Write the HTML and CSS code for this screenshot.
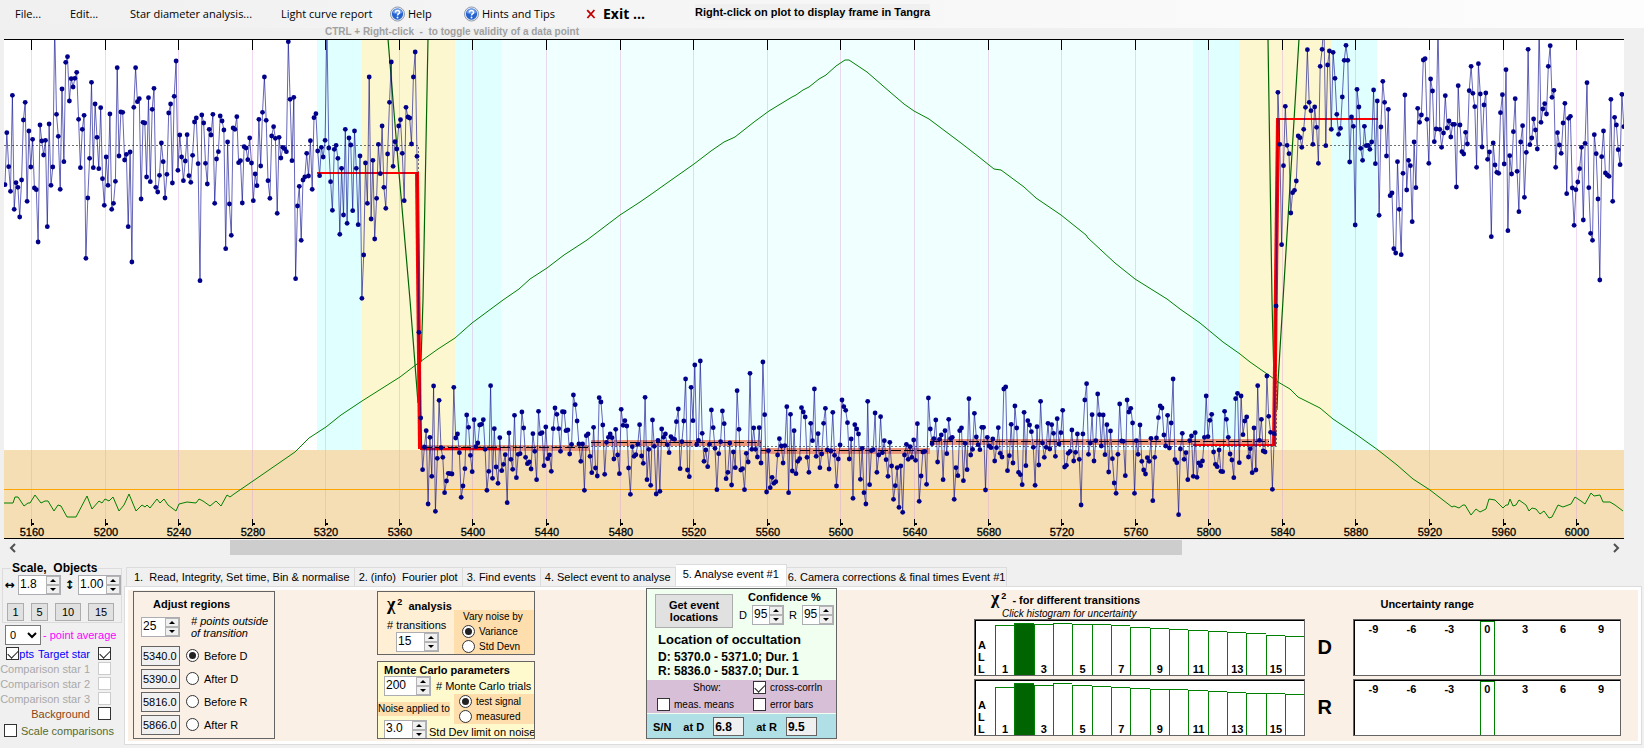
FILE: index.html
```html
<!DOCTYPE html>
<html lang="en">
<head>
  <meta charset="UTF-8">
  <meta name="viewport" content="width=device-width, initial-scale=1.0">
  <title>Light curve analysis</title>
  <link rel="stylesheet" href="styles.css">
</head>
<body>
  <header>
    <nav class="menu">
      <a href="#">File...</a>
      <a href="#">Edit...</a>
      <a href="#">Star diameter analysis...</a>
      <a href="#">Light curve report</a>
      <a href="#" class="with-icon">
        <svg class="help-icon" viewBox="0 0 16 16"><circle cx="8" cy="8" r="7.5" fill="#e4e8ee" stroke="#8b97a8"/><circle cx="8" cy="8" r="6" fill="#2563cf"/><path d="M3 7a5 5 0 0 1 10 0q-5 2-10 0" fill="#6c9bea"/><path d="M5.8 6.4q0-2.2 2.2-2.2t2.2 1.9q0 1-1.1 1.7T8 9.6" fill="none" stroke="#fff" stroke-width="1.6"/><circle cx="8" cy="11.7" r="1" fill="#fff"/></svg>
        Help
      </a>
      <a href="#" class="with-icon">
        <svg class="help-icon" viewBox="0 0 16 16"><circle cx="8" cy="8" r="7.5" fill="#e4e8ee" stroke="#8b97a8"/><circle cx="8" cy="8" r="6" fill="#2563cf"/><path d="M3 7a5 5 0 0 1 10 0q-5 2-10 0" fill="#6c9bea"/><path d="M5.8 6.4q0-2.2 2.2-2.2t2.2 1.9q0 1-1.1 1.7T8 9.6" fill="none" stroke="#fff" stroke-width="1.6"/><circle cx="8" cy="11.7" r="1" fill="#fff"/></svg>
        Hints and Tips
      </a>
      <a href="#" class="with-icon exit">
        <svg class="cross-icon" viewBox="0 0 10 10"><path d="M1.2 1.2L8.6 9M8.4 1L1.4 9" fill="none" stroke="#c00000" stroke-width="1.8"/></svg>
        Exit ...
      </a>
      <span class="hint">Right-click on plot to display frame in Tangra</span>
    </nav>
    <p class="sub-hint">CTRL + Right-click&nbsp; -&nbsp; to toggle validity of a data point</p>
  </header>

  <main>
    <svg id="plot" class="plot" viewBox="4 39 1620 500"></svg>

    <div class="scrollbar">
      <button type="button" aria-label="Scroll left"><svg viewBox="0 0 8 10"><path d="M6 1L2 5l4 4" /></svg></button>
      <div class="track"><div class="thumb"></div></div>
      <button type="button" aria-label="Scroll right"><svg viewBox="0 0 8 10"><path d="M2 1l4 4-4 4" /></svg></button>
    </div>

    <div class="lower">
      <aside class="sidebar">
        <fieldset class="scale">
          <legend>Scale,&nbsp; Objects</legend>
          <div class="scale-row">
            <label for="scale-x">↔</label>
            <span class="spin"><input id="scale-x" value="1.8"><span class="arrows"><button type="button" aria-label="Up"></button><button type="button" aria-label="Down"></button></span></span>
            <label for="scale-y">↕</label>
            <span class="spin"><input id="scale-y" value="1.00"><span class="arrows"><button type="button" aria-label="Up"></button><button type="button" aria-label="Down"></button></span></span>
          </div>
          <div class="zoom-row">
            <button type="button">1</button>
            <button type="button">5</button>
            <button type="button" class="wide">10</button>
            <button type="button" class="wide">15</button>
          </div>
        </fieldset>
        <div class="average">
          <select id="average"><option>0</option></select>
          <label for="average">- point average</label>
        </div>
        <div class="star target">
          <input type="checkbox" id="pts" checked><label for="pts" class="pts">pts</label>
          <label for="target">Target star</label><input type="checkbox" id="target" checked>
        </div>
        <div class="star off"><label for="c1">Comparison star 1</label><input type="checkbox" id="c1" disabled></div>
        <div class="star off"><label for="c2">Comparison star 2</label><input type="checkbox" id="c2" disabled></div>
        <div class="star off"><label for="c3">Comparison star 3</label><input type="checkbox" id="c3" disabled></div>
        <div class="star background"><label for="bg">Background</label><input type="checkbox" id="bg"></div>
        <div class="compare"><input type="checkbox" id="compare"><label for="compare">Scale comparisons</label></div>
      </aside>

      <section class="tabs">
        <div class="tab-row" role="tablist">
          <button type="button" role="tab" class="tab tab-read">1.&nbsp; Read, Integrity, Set time, Bin &amp; normalise</button>
          <button type="button" role="tab" class="tab">2. (info)&nbsp; Fourier plot</button>
          <button type="button" role="tab" class="tab">3. Find events</button>
          <button type="button" role="tab" class="tab">4. Select event to analyse</button>
          <button type="button" role="tab" class="tab active" aria-selected="true">5. Analyse event #1</button>
          <button type="button" role="tab" class="tab tab-camera">6. Camera corrections &amp; final times Event #1</button>
        </div>

        <div class="page">
          <div class="box adjust">
            <h2>Adjust regions</h2>
            <div class="points">
              <span class="spin"><input id="points" value="25"><span class="arrows"><button type="button" aria-label="Up"></button><button type="button" aria-label="Down"></button></span></span>
              <label for="points"># points outside<br>of transition</label>
            </div>
            <div class="region"><input class="value" aria-label="Before D frame" value="5340.0"><input type="radio" name="region" id="before-d" checked><label for="before-d">Before D</label></div>
            <div class="region"><input class="value" aria-label="After D frame" value="5390.0"><input type="radio" name="region" id="after-d"><label for="after-d">After D</label></div>
            <div class="region"><input class="value" aria-label="Before R frame" value="5816.0"><input type="radio" name="region" id="before-r"><label for="before-r">Before R</label></div>
            <div class="region"><input class="value" aria-label="After R frame" value="5866.0"><input type="radio" name="region" id="after-r"><label for="after-r">After R</label></div>
          </div>

          <div class="noise">
            <div class="box chi">
              <div class="chi-left">
                <h2><span class="greek">χ</span><sup>2</sup> analysis</h2>
                <label for="transitions"># transitions</label>
                <span class="spin"><input id="transitions" value="15"><span class="arrows"><button type="button" aria-label="Up"></button><button type="button" aria-label="Down"></button></span></span>
              </div>
              <div class="vary">
                <span>Vary noise by</span>
                <div><input type="radio" name="vary" id="variance" checked><label for="variance">Variance</label></div>
                <div><input type="radio" name="vary" id="stddev"><label for="stddev">Std Devn</label></div>
              </div>
            </div>
            <div class="box monte">
              <h2>Monte Carlo parameters</h2>
              <div class="trials">
                <span class="spin"><input id="trials" value="200"><span class="arrows"><button type="button" aria-label="Up"></button><button type="button" aria-label="Down"></button></span></span>
                <label for="trials"># Monte Carlo trials</label>
              </div>
              <div class="applied">
                <span class="applied-label">Noise applied to</span>
                <div class="applied-options">
                  <div><input type="radio" name="applied" id="test-signal" checked><label for="test-signal">test signal</label></div>
                  <div><input type="radio" name="applied" id="measured"><label for="measured">measured</label></div>
                </div>
              </div>
              <div class="limit">
                <span class="spin"><input id="limit" value="3.0"><span class="arrows"><button type="button" aria-label="Up"></button><button type="button" aria-label="Down"></button></span></span>
                <label for="limit">Std Dev limit on noise</label>
              </div>
            </div>
          </div>

          <div class="box event">
            <div class="event-top">
              <button type="button" class="locate">Get event<br>locations</button>
              <div class="confidence">
                <h2>Confidence %</h2>
                <div>
                  <label for="conf-d">D</label>
                  <span class="spin"><input id="conf-d" value="95"><span class="arrows"><button type="button" aria-label="Up"></button><button type="button" aria-label="Down"></button></span></span>
                  <label for="conf-r">R</label>
                  <span class="spin"><input id="conf-r" value="95"><span class="arrows"><button type="button" aria-label="Up"></button><button type="button" aria-label="Down"></button></span></span>
                </div>
              </div>
            </div>
            <div class="location">
              <h3>Location of occultation</h3>
              <p>D: 5370.0 - 5371.0; Dur. 1</p>
              <p>R: 5836.0 - 5837.0; Dur. 1</p>
            </div>
            <div class="show">
              <span class="show-title">Show:</span>
              <span><input type="checkbox" id="corr" checked><label for="corr">cross-corrln</label></span>
              <span><input type="checkbox" id="means"><label for="means">meas. means</label></span>
              <span><input type="checkbox" id="errors"><label for="errors">error bars</label></span>
            </div>
            <div class="sn">
              <span>S/N</span>
              <label for="sn-d">at D</label><input class="value" id="sn-d" value="6.8">
              <label for="sn-r">at R</label><input class="value" id="sn-r" value="9.5">
            </div>
          </div>

          <div class="histograms">
            <h2><span class="greek">χ</span><sup>2</sup> - for different transitions</h2>
            <p>Click histogram for uncertainty</p>
            <div class="histogram" id="hist-d"></div>
            <div class="histogram" id="hist-r"></div>
          </div>

          <div class="letters">
            <span>D</span>
            <span>R</span>
          </div>

          <div class="ranges">
            <h2>Uncertainty range</h2>
            <div class="range"><span>-9</span><span>-6</span><span>-3</span><span class="zero">0</span><span>3</span><span>6</span><span>9</span></div>
            <div class="range"><span>-9</span><span>-6</span><span>-3</span><span class="zero">0</span><span>3</span><span>6</span><span>9</span></div>
          </div>
        </div>
      </section>
    </div>
  </main>

  <script src="chart.js"></script>
</body>
</html>
```
FILE: styles.css
```css
* {
  box-sizing: border-box;
}
body {
  margin: 0;
  background-color: #f0f0f0;
  color: #000;
  font-family: 'Liberation Sans', Arial, sans-serif;
  font-size: 11px;
  line-height: 14px;
}
h2, h3, p {
  margin: 0;
}
h2 {
  font-size: 11px;
  line-height: 16px;
}
button, input, select {
  font: inherit;
  color: inherit;
  margin: 0;
  padding: 0;
}
label, .tab, h2, h3, p {
  white-space: nowrap;
}

/* menu */
header {
  height: 39px;
}
.menu {
  display: grid;
  grid-template-columns: 55px 60px 151px 109px 74px 122px 109px auto;
  align-items: center;
  justify-content: start;
  height: 28px;
  padding-left: 15px;
  background: linear-gradient(to right, #f0f0f0, #fdfdfd);
  font-family: 'Open Sans', 'Noto Sans', sans-serif;
  font-size: 11px;
}
.menu a {
  color: #000;
  text-decoration: none;
  white-space: nowrap;
}
.with-icon {
  display: flex;
  align-items: center;
  gap: 3px;
}
.help-icon {
  width: 15px;
  height: 16px;
}
.cross-icon {
  width: 10px;
  height: 10px;
  margin-right: 4px;
}
.menu .exit {
  font-size: 14px;
  font-weight: bold;
}
.hint {
  align-self: start;
  margin-top: 4px;
  background-color: #f0f0f0;
  font-family: 'Liberation Sans', Arial, sans-serif;
  font-size: 11px;
  font-weight: bold;
  line-height: 16px;
}
.sub-hint {
  padding-left: 325px;
  color: #a0a0a0;
  font-size: 10px;
  font-weight: bold;
  line-height: 8px;
}

/* light curve */
.plot {
  display: block;
  width: calc(100% - 24px);
  margin-left: 4px;
  font-size: 11px;
}
.plot rect, .plot line {
  shape-rendering: crispEdges;
}
.curve {
  fill: none;
}
.scrollbar {
  display: flex;
  height: 17px;
  margin: 0 20px 0 4px;
  padding: 1px 0;
}
.scrollbar button {
  width: 17px;
  border: 0;
  background: none;
}
.scrollbar svg {
  display: block;
  width: 8px;
  height: 10px;
  margin: auto;
  fill: none;
  stroke: #505050;
  stroke-width: 2;
}
.track {
  flex: 1;
}
.thumb {
  width: 60%;
  height: 15px;
  margin-left: 13.2%;
  background-color: #cdcdcd;
}

/* form controls */
.spin {
  display: inline-flex;
  height: 20px;
  border: 1px solid #abadb3;
  background-color: #fff;
}
.spin input {
  flex: 1;
  width: 0;
  padding-left: 1px;
  padding-bottom: 3px;
  border: 0;
  outline: 0;
  background: none;
  font-size: 12px;
}
.arrows {
  display: flex;
  flex-direction: column;
  width: 14px;
}
.arrows button {
  display: flex;
  flex: 1;
  align-items: center;
  justify-content: center;
  border: 1px solid #b4b4b4;
  background-color: #f0f0f0;
}
.arrows button::before {
  content: '';
  border: 3px solid transparent;
  border-top-width: 0;
  border-bottom-color: #000;
}
.arrows button:last-child::before {
  border-top: 3px solid #000;
  border-bottom-width: 0;
}
input[type="checkbox"], input[type="radio"] {
  appearance: none;
  display: grid;
  flex: none;
  place-items: center;
  width: 13px;
  height: 13px;
  border: 1px solid #333;
  background-color: #fff;
}
input[type="radio"] {
  border-radius: 50%;
}
input[type="radio"]:checked::after {
  content: '';
  width: 7px;
  height: 7px;
  border-radius: 50%;
  background-color: #222;
}
input[type="checkbox"]:checked::after {
  content: '';
  width: 9px;
  height: 5px;
  border-left: 1px solid #222;
  border-bottom: 1px solid #222;
  transform: translateY(-1px) rotate(-45deg);
}
input[type="checkbox"]:disabled {
  border-color: #ccc;
}
.value {
  width: 39px;
  height: 20px;
  padding-left: 1px;
  border: 1px solid #646464;
  background-color: #f0f0f0;
}

/* sidebar */
.lower {
  display: flex;
}
.sidebar {
  width: 124px;
  padding-top: 5px;
}
.scale {
  width: 119px;
  height: 62px;
  margin: 0 0 0 2px;
  padding: 0;
  border: 1px solid #dcdcdc;
}
.scale legend {
  margin-left: 8px;
  padding: 0 1px;
  font-size: 12px;
  font-weight: bold;
  line-height: 14px;
}
.scale-row {
  display: flex;
  align-items: center;
  gap: 2px;
}
.scale-row label {
  width: 13px;
  font-family: 'DejaVu Sans', sans-serif;
  font-size: 12px;
  font-weight: bold;
  text-align: center;
}
.scale-row .spin {
  width: 43px;
}
.zoom-row {
  display: flex;
  gap: 7px;
  margin: 8px 0 0 4px;
}
.zoom-row button {
  width: 17px;
  height: 18px;
  border: 1px solid #adadad;
  background-color: #e1e1e1;
}
.zoom-row .wide {
  width: 26px;
}
.average {
  display: flex;
  align-items: center;
  width: 120px;
  height: 23px;
  padding-left: 5px;
  color: #f0f;
}
.average select {
  flex: none;
  width: 36px;
  height: 20px;
  margin-right: 2px;
  border: 1px solid #7a7a7a;
  background-color: #fff;
  color: #000;
}
.star {
  display: flex;
  align-items: center;
  justify-content: flex-end;
  gap: 8px;
  width: 111px;
  height: 15px;
}
.target {
  gap: 0;
  color: #00f;
}
.pts {
  margin-right: 4px;
}
.target #target {
  margin-left: 8px;
}
.off {
  color: #a9a9a9;
}
.background {
  color: #8b4513;
}
.compare {
  display: flex;
  align-items: center;
  gap: 4px;
  width: 120px;
  height: 19px;
  padding-left: 4px;
  color: #556b2f;
}

/* tabs */
.tabs {
  flex: 1;
  min-width: 0;
  padding: 8px 2px 0 0;
}
.tab-row {
  display: flex;
  align-items: flex-end;
  height: 22px;
  padding-left: 2px;
}
.tab {
  height: 19px;
  padding: 0 4px;
  border: 1px solid #dcdcdc;
  border-left-width: 0;
  border-bottom: 0;
  background-color: #f0f0f0;
}
.tab-read {
  padding: 0 4px 0 7px;
  border-left-width: 1px;
}
.tab-camera {
  padding: 0 1px;
}
.tab.active {
  height: 22px;
  padding: 0 7px 3px;
  background-color: #fff;
}
.page {
  display: flex;
  height: 159px;
  padding: 0 20px 0 5px;
  border: 1px solid #dcdcdc;
  box-shadow: inset 0 0 0 3px #fff;
  background-color: #faf0e6;
}
.box {
  flex: none;
  border: 1px solid #646464;
  overflow: hidden;
}
.adjust {
  width: 142px;
  height: 148px;
  margin: 4px 0 0 3px;
  padding-left: 7px;
}
.adjust h2 {
  padding: 4px 0 4px 12px;
}
.points {
  display: flex;
  align-items: center;
  gap: 11px;
  height: 22px;
  margin-bottom: 6px;
  font-style: italic;
  line-height: 12px;
}
.points .spin {
  width: 39px;
  font-style: normal;
}
.region {
  display: flex;
  align-items: center;
  gap: 5px;
  height: 23px;
}
.region .value {
  margin-right: 1px;
}

.noise {
  margin: 4px 0 0 102px;
}
.noise .box {
  width: 158px;
}
.chi {
  display: flex;
  justify-content: space-between;
  height: 64px;
  margin-bottom: 6px;
  background-color: #ffefd5;
}
.chi-left {
  padding: 4px 0 0 9px;
}
.greek {
  font-family: 'Liberation Serif', serif;
  font-size: 18px;
}
h2 sup {
  font-size: 9px;
  line-height: 0;
  margin: 0 3px 0 2px;
}
.chi-left label {
  display: block;
  padding-top: 4px;
}
.chi-left .spin {
  width: 43px;
  margin-left: 9px;
}
.vary {
  align-self: flex-end;
  width: 80px;
  height: 44px;
  padding-left: 8px;
  background-color: #ffdead;
  font-size: 10px;
}
.vary div, .applied-options div {
  display: flex;
  align-items: center;
  gap: 4px;
  height: 15px;
}
.vary span {
  padding-left: 1px;
}
.monte {
  height: 78px;
  background-color: #fffacd;
}
.monte h2 {
  padding-left: 6px;
}
.trials {
  display: flex;
  align-items: center;
  gap: 5px;
  height: 16px;
  padding-left: 6px;
}
.trials .spin {
  width: 47px;
}
.applied {
  display: flex;
  align-items: center;
  justify-content: space-between;
  font-size: 10px;
}
.applied-label {
  background-color: #ffdead;
  white-space: nowrap;
}
.applied-options {
  width: 80px;
  padding-left: 5px;
  background-color: #ffdead;
}
.limit {
  display: flex;
  align-items: center;
  gap: 2px;
  height: 15px;
  padding-left: 6px;
}
.limit .spin {
  flex: none;
  width: 43px;
  margin-top: -4px;
}

.event {
  width: 191px;
  height: 151px;
  margin: 1px 0 0 111px;
  background-color: #f0fff0;
}
.event-top {
  display: flex;
  gap: 6px;
  padding-left: 8px;
}
.locate {
  width: 78px;
  height: 34px;
  margin-top: 5px;
  border: 1px solid #adadad;
  background-color: #e1e1e1;
  font-weight: bold;
  line-height: 12px;
}
.confidence h2 {
  padding-left: 9px;
}
.confidence div {
  display: flex;
  align-items: center;
  gap: 5px;
}
.confidence .spin {
  width: 32px;
}
.location {
  height: 52px;
  padding: 2px 0 0 11px;
  font-size: 12px;
  font-weight: bold;
}
.location h3 {
  font-size: 13px;
  line-height: 20px;
}
.show {
  display: grid;
  grid-template-columns: 96px auto;
  align-items: center;
  height: 33px;
  padding-left: 10px;
  background-color: #d8bfd8;
  font-size: 10px;
}
.show span {
  display: flex;
  gap: 4px;
}
.show .show-title {
  padding-left: 36px;
}
.sn {
  display: flex;
  align-items: center;
  height: 25px;
  margin-top: 1px;
  padding-left: 6px;
  background-color: #b0e0e6;
  font-weight: bold;
}
.sn label {
  margin: 0 9px 0 12px;
}
.sn .value {
  width: 31px;
  height: 19px;
  font-size: 12px;
}

.histograms {
  flex: 332;
  margin-left: 137px;
}
.histograms h2 {
  padding: 2px 0 0 17px;
  line-height: 18px;
}
.histograms p {
  padding-left: 28px;
  font-size: 10px;
  font-style: italic;
  line-height: 10px;
}
.histogram, .range {
  display: flex;
  height: 57px;
  margin-bottom: 3px;
  border: 1px solid #646464;
  background-color: #fff;
  box-shadow: inset 1px 1px 0 #000;
  overflow: hidden;
}
.histogram {
  align-items: flex-end;
}
.all {
  width: 20px;
  padding: 0 0 0 3px;
  font-weight: bold;
  line-height: 12px;
}
.bar {
  display: flex;
  flex: 1;
  align-items: flex-end;
  justify-content: center;
  border-top: 1px solid #008000;
  border-left: 1px solid #008000;
  font-weight: bold;
  line-height: 11px;
}
.bar.selected {
  background-color: #006400;
}
.letters {
  display: flex;
  flex-direction: column;
  gap: 3px;
  width: 48px;
  padding: 32px 0 0 12px;
  font-size: 20px;
  font-weight: bold;
}
.letters span {
  height: 57px;
  line-height: 57px;
}
.ranges {
  flex: 268;
}
.ranges h2 {
  padding: 9px 0 7px 27px;
}
.range span {
  display: flex;
  flex: 1;
  justify-content: center;
  padding-top: 1px;
  font-weight: bold;
  line-height: 16px;
}
.range .zero::before {
  content: '';
  position: absolute;
  width: 13px;
  height: 53px;
  border: 1px solid #008000;
  border-bottom: 0;
}
```
FILE: chart.js
```js
// brightness of each frame, a third of a pixel per unit, measured from the top
const frames = [
  // before the D event
  554,398,500,574,286,628,548,562,651,540,360,307,604,393,501,418,564,569,726,375,423,465,421,680,372,556,501,80,343,409,
  568,267,485,187,170,303,236,261,235,217,358,503,388,346,775,594,475,247,503,312,412,506,323,536,616,471,556,342,628,610,
  544,203,468,336,337,480,463,680,456,786,322,203,305,296,597,367,369,531,293,545,328,265,562,576,526,429,485,594,523,339,
  312,549,289,183,511,405,471,542,483,404,527,547,466,366,354,491,842,345,369,490,552,388,405,343,610,477,455,348,363,390,
  746,426,612,706,384,388,350,488,482,609,440,444,479,414,489,602,522,557,358,498,337,231,361,542,595,408,380,415,640,412,
  474,442,446,455,125,298,482,292,836,618,559,721,540,531,460,528,422,568,353,341,453,527,442,471,421,80,444,545,631,448,
  436,475,703,505,645,388,670,414,435,632,393,505,674,468,895,765,489,610,231,657,481,717,595,433,521,378,562,625,462,307,
  186,499,425,447,378,359,460,602,322,351,354,432,231,156,469,
  // occulted
  997,1254,1409,1341,1292,1512,1312,1429,1158,1534,1375,1201,1343,1372,1478,1443,1420,1421,1422,1162,1314,1302,1358,1492,
  1458,1406,1245,1282,1366,1415,1259,1340,1329,1275,1273,1259,1348,1471,1414,1157,1435,1286,1401,1450,1313,1412,1393,1364,
  1508,1299,1378,1408,1246,1433,1363,1361,1236,1284,1372,1391,1386,1407,1301,1354,1439,1234,1301,1298,1397,1281,1376,1365,
  1414,1286,1224,1243,1286,1354,1235,1236,1292,1290,1362,1333,1185,1214,1263,1332,1384,1332,1471,1307,1302,1369,1418,1282,
  1404,1428,1193,1206,1275,1423,1327,1312,1302,1313,1377,1288,1365,1421,1228,1276,1262,1278,1404,1483,1340,1369,1364,1333,
  1274,1368,1390,1192,1439,1348,1456,1260,1339,1482,1321,1474,1287,1312,1302,1334,1358,1310,1316,1318,1265,1227,1406,1325,
  1263,1137,1410,1430,1162,1262,1095,1334,1321,1083,1300,1384,1350,1400,1333,1230,1283,1345,1469,1361,1325,1233,1271,1436,
  1417,1329,1455,1356,1403,1172,1288,1410,1406,1469,1360,1386,1120,1348,1284,1348,1371,1283,1389,1086,1244,1476,1352,1463,
  1432,1450,1445,1365,1316,1338,1389,1337,1220,1478,1243,1413,1292,1421,1384,1376,1223,1236,1251,1372,1417,1270,1322,1167,
  1369,1301,1403,1362,1270,1225,1350,1407,1353,1237,1366,1458,1377,1335,1200,1220,1231,1268,1377,1317,1495,1274,1287,1302,
  1438,1345,1478,1512,1204,1454,1352,1349,1239,1417,1365,1250,1358,1322,1379,1429,1327,1398,1498,1457,1403,1522,1398,1537,
  1365,1333,1378,1340,1372,1320,1381,1271,1504,1428,1356,1354,1453,1194,1287,1331,1316,1260,1386,1318,1305,1439,1292,1361,
  1258,1316,1312,1498,1403,1427,1292,1284,1442,1330,1409,1196,1365,1348,1240,1311,1334,1349,1282,1282,1470,1312,1338,1343,
  1317,1383,1343,1283,1360,1371,1167,1161,1412,1367,1273,1389,1218,1284,1417,1424,1454,1237,1397,1262,1275,1295,1342,1456,
  1280,1395,1204,1329,1372,1342,1270,1347,1274,1300,1369,1256,1332,1298,1231,1401,1396,1360,1354,1290,1383,1357,1302,1378,
  1515,1302,1200,1151,1363,1329,1244,1383,1322,1182,1244,1338,1245,1364,1274,1416,1293,1376,1449,1480,1363,1212,1323,1324,
  1427,1200,1236,1225,1269,1480,1322,1363,1275,1384,1410,1422,1373,1384,1315,1502,1372,1314,1253,1218,1224,1305,1338,1246,
  1344,1269,1137,1379,1388,1544,1347,1300,1378,1358,1439,1322,1308,1429,1298,1432,1389,1397,1383,1312,1188,1310,1261,1243,
  1356,1393,1400,1350,1414,1415,1234,1258,1312,1362,1380,1433,1196,1180,1388,1188,1304,1263,1251,1371,1346,1418,1284,1410,
  1157,1321,1258,1353,1356,1128,1249,1297,1468,1301,918,
  // after the R event
  277,433,734,497,319,436,461,639,578,571,543,408,413,442,388,322,149,307,332,433,321,382,490,199,148,60,437,195,153,388,
  157,235,343,403,385,291,181,136,181,486,351,379,675,268,321,445,481,379,437,436,448,426,270,491,303,646,381,244,307,468,
  328,587,579,746,759,485,628,764,520,285,570,481,497,665,426,563,325,367,345,180,176,358,490,237,273,425,387,80,388,442,
  399,287,384,363,411,373,373,561,257,375,455,462,397,432,272,199,280,320,502,191,282,441,315,279,478,456,710,429,495,517,
  520,338,284,492,209,692,467,522,395,296,514,635,426,377,592,457,148,434,414,357,390,447,80,367,327,311,342,199,137,292,
  271,502,398,435,460,369,310,581,355,349,564,676,569,546,506,442,660,430,248,563,700,721,404,461,597,840,470,393,519,525,
  529,298,604,352,375,449,494,283,380
];

const crossCorrelation = `4,503 13,503 15,497 18,497 24,506 28,503 30,503 35,495 41,503 45,501 48,501 54,511 58,505 61,506 67,517
  76,517 87,496 92,509 99,501 102,503 105,499 109,501 113,497 119,511 124,505 129,494 136,511 142,505 145,507 147,505 150,508
  157,499 160,503 164,499 168,505 176,511 179,504 187,502 196,503 199,499 203,501 210,506 216,501 221,506 227,495 230,497
  234,494 253,481 295,452 309,438 326,427 341,415 362,401 400,377 417,364 438,349 455,338 472,323 503,300 519,289 530,279
  547,268 564,255 587,240 620,215 640,202 653,193 667,183 694,164 711,151 724,142 735,137 754,122 769,111 792,97 796,95
  803,90 809,87 819,79 826,75 836,66 845,60 849,60 867,72 890,92 904,104 914,111 929,119 961,143 979,157 994,169 1001,170
  1024,187 1036,198 1061,215 1086,235 1088,238 1115,263 1135,279 1167,299 1180,309 1200,323 1223,342 1240,354 1250,362
  1270,376 1278,382 1290,389 1298,397 1320,408 1333,419 1357,435 1378,450 1397,465 1413,479 1430,490 1452,507 1454,506
  1459,508 1463,505 1465,505 1471,515 1476,509 1480,512 1486,509 1489,499 1495,500 1503,508 1506,505 1508,505 1510,499
  1513,506 1516,505 1519,500 1526,505 1529,511 1532,508 1536,509 1540,514 1544,511 1549,518 1552,517 1558,505 1563,507
  1571,504 1575,497 1581,501 1585,504 1591,493 1594,496 1600,495 1603,502 1610,502 1615,505 1623,511`;

const rect = (x1, x2, y1, y2, fill) =>
  `<rect x="${x1}" y="${y1}" width="${x2 - x1}" height="${y2 - y1}" fill="${fill}"/>`;
const line = (points, stroke, width, extra = '') =>
  `<polyline class="curve" points="${points}" stroke="${stroke}" stroke-width="${width}" ${extra}/>`;

function drawPlot() {
  const out = [];
  out.push(rect(4, 1624, 39, 539, '#fff'));

  // fitting regions
  [[317, 362, '#e0ffff'], [362, 455, '#fdf7d0'], [455, 501, '#e0ffff'], [501, 1193, '#f0ffff'],
   [1193, 1239, '#e0ffff'], [1239, 1331, '#fdf7d0'], [1331, 1377, '#e0ffff']]
    .forEach(([a, b, fill]) => out.push(rect(a, b, 39, 450, fill)));
  out.push(rect(4, 1624, 450, 539, '#f5deb3'));

  // mean levels
  const means = [[422, 589, 447], [591, 761, 442], [761, 930, 450], [930, 1269, 441]];
  means.forEach(([a, b, y]) => out.push(rect(a, b, y - 2, y + 4, '#e9967a')));

  // frame scale
  for (let i = 0; i < 22; i++) {
    const x = Math.round(31 + i * 73.58);
    out.push(`<rect x="${x}" y="50" width="1" height="469" fill="#dda0dd" opacity=".4"/>`);
    out.push(rect(x, x + 1, 39, 50, '#000'), rect(x, x + 1, 519, 526, '#000'), rect(x + 1, x + 3, 523, 525, '#000'));
    out.push(`<text x="${x + 1}" y="536" text-anchor="middle" stroke="#000" stroke-width=".3">${5160 + i * 40}</text>`);
  }

  out.push(rect(4, 1624, 489, 490, '#ffa500'));
  out.push(line('4,145.5 418.5,145.5 418.5,446.5 1276.5,446.5 1276.5,145.5 1624,145.5', '#707070', 1, 'stroke-dasharray="2 2"'));
  means.forEach(([a, b, y]) => out.push(line(`${a},${y + 0.5} ${b},${y + 0.5}`, '#000', 1, 'stroke-dasharray="10 3"')));

  out.push(line(crossCorrelation, '#008000', 1));
  out.push(line('388,39 399,173 410,300 418,403', '#006400', 1.2));
  out.push(line('428,39 423,300 421,362', '#006400', 1.2));
  out.push(line('1268,39 1272,300 1274,380', '#006400', 1.2));
  out.push(line('1299,39 1283,300 1278,382 1277,410', '#006400', 1.2));

  out.push(line('317,173 417,173', '#f00', 2), line('417,172 420,449', '#f00', 4), line('420,449 501,449', '#f00', 2));
  out.push(line('1193,445 1275,445', '#f00', 2), line('1274,446 1278,118', '#f00', 4), line('1278,119 1378,119', '#f00', 2));

  const pts = frames.map((v, i) => [5 + i * 1.8395, v / 3]);
  out.push(line(pts.map(p => p[0].toFixed(1) + ',' + p[1].toFixed(1)).join(' '), '#00008b', 1, 'opacity=".6"'));
  pts.forEach(([x, y]) => {
    if (y > 39) out.push(`<circle cx="${x.toFixed(1)}" cy="${y.toFixed(1)}" r="2.4" fill="#00008b"/>`);
  });

  out.push(rect(4, 1624, 39, 40, '#000'), rect(4, 1624, 538, 539, '#000'));
  document.getElementById('plot').innerHTML = out.join('');
}

function drawHistogram(id, heights) {
  const bars = heights.map((h, i) =>
    `<div class="bar${i === 1 ? ' selected' : ''}" style="height:${h}px">${i % 2 ? '' : i + 1}</div>`);
  document.getElementById(id).innerHTML = '<div class="all">A<br>L<br>L</div>' + bars.join('');
}

drawPlot();
drawHistogram('hist-d', [50, 52, 51, 52, 51, 51, 50, 48, 47, 46, 45, 44, 43, 42, 40, 39]);
drawHistogram('hist-r', [48, 52, 50, 52, 50, 49, 48, 47, 46, 46, 45, 44, 43, 42, 42, 41]);
```
